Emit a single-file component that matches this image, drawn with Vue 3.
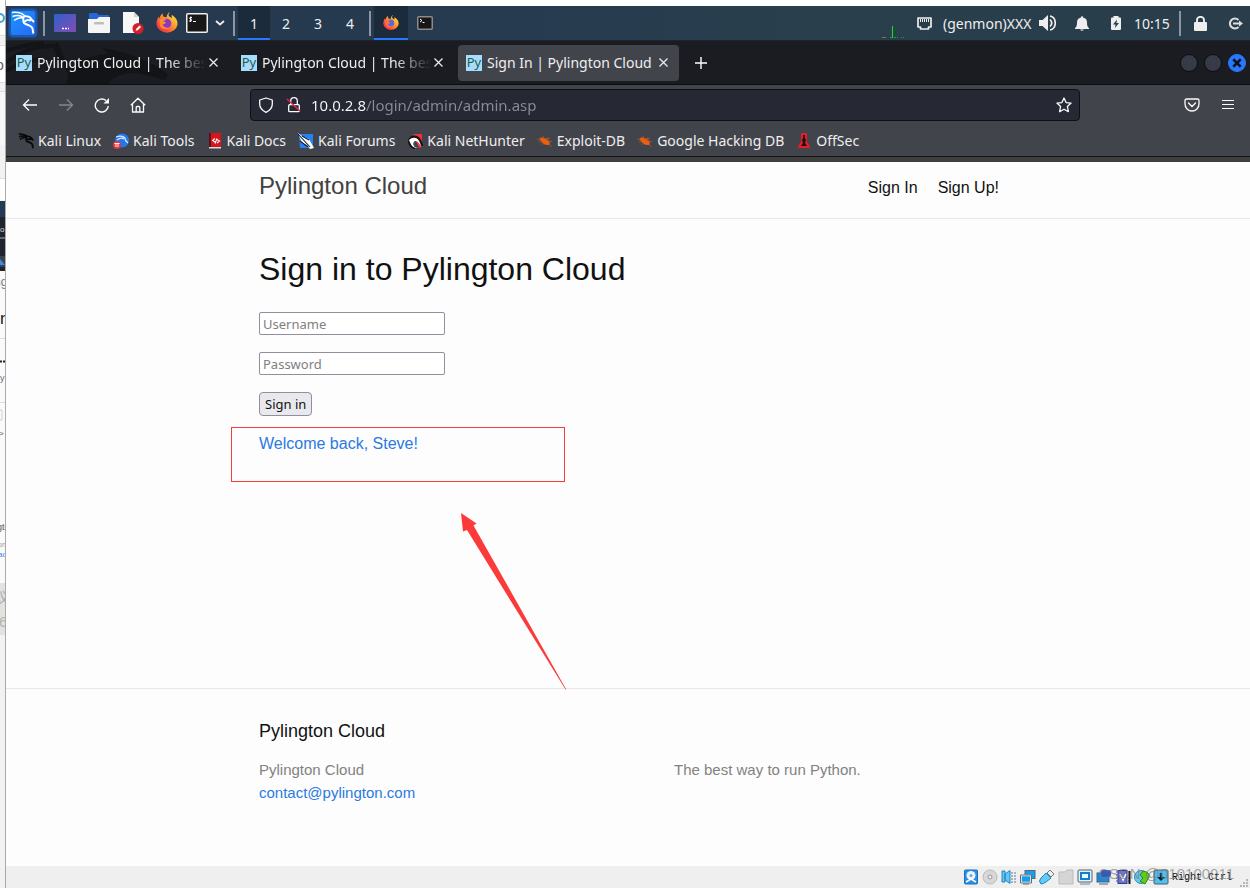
<script setup>
import { ref } from 'vue'

const username = ref('')
const password = ref('')
const url = ref('10.0.2.8/login/admin/admin.asp')

const dragon =
  'M1 1.5C6 1 11 2 14 5M1.500 5.500C6 4 10 4.500 13 6.500M3 9.500C6 7 9 6 12.500 7'
const dragonBody =
  'M12 5.500C13 8 11.500 10 13 12C15 14 19 13.500 21 16.500C22.300 18.500 21.500 20.500 22.500 22.500M12.500 5.500C16 4.500 19.500 6 20.500 8.500L23 11M20 9.500C16.500 8.500 14 9 14.500 11'

const tabs = [
  { title: 'Pylington Cloud | The best', active: false },
  { title: 'Pylington Cloud | The best', active: false },
  { title: 'Sign In | Pylington Cloud', active: true },
]
const workspaces = [1, 2, 3, 4]
const bookmarks = [
  { name: 'Kali Linux', icon: 'dragon' },
  { name: 'Kali Tools', icon: 'tools' },
  { name: 'Kali Docs', icon: 'docs' },
  { name: 'Kali Forums', icon: 'forums' },
  { name: 'Kali NetHunter', icon: 'hunter' },
  { name: 'Exploit-DB', icon: 'bug' },
  { name: 'Google Hacking DB', icon: 'bug' },
  { name: 'OffSec', icon: 'offsec' },
]
const devices = ['disk', 'optical', 'audio', 'network', 'usb', 'folder', 'display', 'record', 'cpu', 'mouse', 'host']
</script>

<template>
  <div class="desktop">
    <div class="behind" aria-hidden="true">
      <svg width="6" height="888">
        <rect width="6" height="888" fill="#f2f2f2" />
        <rect width="6" height="35" fill="#fff" />
        <rect y="46" width="6" height="36" fill="#fff" />
        <rect y="92" width="6" height="53" fill="#f7f7f7" />
        <rect y="178" width="6" height="22" fill="#fff" />
        <rect y="201" width="6" height="16" fill="#243b55" />
        <rect y="217" width="6" height="54" fill="#20242d" />
        <rect y="237" width="6" height="2" fill="#656973" />
        <rect y="256" width="6" height="11" fill="#3d4149" />
        <path d="M0 259l5 6h-5z" fill="#3988ed" />
        <rect y="271" width="6" height="312" fill="#fafafa" />
        <rect y="583" width="6" height="52" fill="#e2e2e2" />
        <path d="M0 35.500h6M0 45.500h6M0 82.500h6M0 91.500h6M0 178.500h6M0 338.500h6M0 402.500h6" stroke="#ddd" />
        <path d="M0 14a4 4 0 0 1 0 8" fill="none" stroke="#38a9df" stroke-width="2" />
        <text x="-4" y="70" font-size="14" fill="#6b5960">o</text>
        <text x="0" y="232" font-size="8" fill="#ddd">o</text>
        <text x="-6" y="286" font-size="12" fill="#777">ng</text>
        <text x="0" y="324" font-size="17" fill="#222">r</text>
        <path d="M0 361.500h5" stroke="#222" stroke-width="2" stroke-dasharray="2 1" />
        <text x="-3" y="381" font-size="9" fill="#656d81">ry</text>
        <path d="M0 410h2v10h-2" fill="none" stroke="#cfcfd4" />
        <text x="-1" y="436" font-size="8" fill="#555">&gt;</text>
        <text x="-3" y="530" font-size="9" fill="#555">gto</text>
        <text x="-2" y="547" font-size="7" fill="#999">on</text>
        <text x="-2" y="557" font-size="8" fill="#408be0">ad</text>
        <text x="-5" y="602" font-size="14" fill="#aaa">议</text>
        <text x="-1" y="627" font-size="15" fill="#bbb3a5">6</text>
      </svg>
    </div>

    <div class="screen">
      <header class="panel">
        <button class="cell kali" aria-label="Applications">
          <svg width="34" height="34" viewBox="0 0 34 34">
            <defs>
              <linearGradient id="kg" x2="1" y2="1"><stop stop-color="#1796fd" /><stop offset="1" stop-color="#2869f6" /></linearGradient>
            </defs>
            <rect x="2" y="2" width="30" height="30" rx="5" fill="#185cb8" opacity=".45" />
            <rect x="3" y="3" width="28" height="28" rx="4" fill="#1b62d2" opacity=".6" />
            <rect x="5" y="5" width="24" height="24" rx="2" fill="url(#kg)" />
            <g transform="translate(5 5)" fill="none" stroke="#fff">
              <path :d="dragon" stroke-width="1.500" /><path :d="dragonBody" stroke-width="2" />
            </g>
          </svg>
        </button>
        <i class="rule"></i>
        <button class="cell launcher" aria-label="Desktop">
          <svg width="22" height="18" viewBox="0 0 22 18">
            <defs><linearGradient id="dg" x2="1" y2="1"><stop stop-color="#2f61ca" /><stop offset="1" stop-color="#844bb4" /></linearGradient></defs>
            <rect width="22" height="18" rx="1" fill="url(#dg)" /><path d="M8 14.500h2m1 0h2m1 0h1" stroke="#fff" stroke-width="1.500" />
          </svg>
        </button>
        <button class="cell launcher" aria-label="Files">
          <svg width="22" height="20" viewBox="0 0 22 20">
            <path d="M1 1q0-1 1-1h7l2 2h9q1 0 1 1v5h-20z" fill="#2667d8" />
            <path d="M0 6h9l2-2h11v15q0 1-1 1h-20q-1 0-1-1z" fill="#f5f5f5" /><rect x="6" y="9" width="10" height="2.500" rx="1" fill="#bdbdbd" />
          </svg>
        </button>
        <button class="cell launcher" aria-label="Text editor">
          <svg width="22" height="22" viewBox="0 0 22 22">
            <path d="M1 0h11l5 5v16h-16z" fill="#f7f7f7" /><path d="M12 0v5h5" fill="#d2d2d2" />
            <circle cx="16" cy="16.500" r="5.500" fill="#d51e27" /><path d="M13.500 19l1-2.500 3-3 1.500 1.500-3 3z" fill="#fff" />
          </svg>
        </button>
        <button class="cell launcher" aria-label="Firefox">
          <svg width="22" height="22" viewBox="0 0 22 22">
            <defs><linearGradient id="fg" x1="1" x2="0" y2="1"><stop stop-color="#fff34c" /><stop offset=".4" stop-color="#ffa02c" /><stop offset=".75" stop-color="#f6433f" /><stop offset="1" stop-color="#e22771" /></linearGradient></defs>
            <path d="M14 0c-2 2-2 4 0 5l2 1c0-1-1-2 0-3 3 2 6 5 5.500 9.500a10.600 9.500 0 0 1-21 0c-.2-3 .5-6 2.500-8 0 1 0 1.500.5 2C4 4 5 2.500 7 1.500c-.5 1.500 0 2.500 1 3.500 1 0 2 .1 2.500.5C11 2.500 12 1 14 0z" fill="url(#fg)" />
            <circle cx="10.500" cy="11.500" r="4.800" fill="#8b39c5" /><path d="M3.500 8.500c2-2 5-2 7-.5-2 0-3 1-3 2 1 0 2 0 2.500.5-1 1.500-2.500 1.500-3.500 2 1 3 4.500 4 8 2.500-4 4-10 2-11-2z" fill="#ff8f25" />
          </svg>
        </button>
        <button class="cell terminal" aria-label="Terminal">
          <svg width="22" height="20" viewBox="0 0 22 20">
            <rect x=".75" y=".75" width="20.500" height="18.500" rx="1" fill="#181818" stroke="#eee" stroke-width="1.500" />
            <path d="M6 4.500H4q-1 1 0 1.500l1.500.7q.5 1-.5 1.300H3M4.700 3.500v5.500M7 8.500h3" fill="none" stroke="#fff" />
          </svg>
        </button>
        <button class="cell more" aria-label="More terminals">
          <svg width="10" height="6" viewBox="0 0 10 6"><path d="M1 1l4 3.500L9 1" fill="none" stroke="#eee" stroke-width="1.800" /></svg>
        </button>
        <i class="rule"></i>
        <nav class="spaces">
          <button v-for="n in workspaces" :key="n" class="space" :class="{ on: n === 1 }">{{ n }}</button>
        </nav>
        <i class="rule"></i>
        <button class="task on" aria-label="Firefox window">
          <svg width="16" height="16" viewBox="0 0 22 22">
            <path d="M14 0c-2 2-2 4 0 5l2 1c0-1-1-2 0-3 3 2 6 5 5.500 9.500a10.600 9.500 0 0 1-21 0c-.2-3 .5-6 2.500-8 0 1 0 1.500.5 2C4 4 5 2.500 7 1.500c-.5 1.500 0 2.500 1 3.500 1 0 2 .1 2.500.5C11 2.500 12 1 14 0z" fill="url(#fg)" />
            <circle cx="10.500" cy="11" r="4.800" fill="#5369df" /><path d="M3.500 8.500c2-2 5-2 7-.5-2 0-3 1-3 2 1 0 2 0 2.500.5-1 1.500-2.500 1.500-3.500 2 1 3 4.500 4 8 2.500-4 4-10 2-11-2z" fill="#ff7138" />
          </svg>
        </button>
        <button class="task" aria-label="Terminal window">
          <svg width="16" height="14" viewBox="0 0 16 14"><rect x=".75" y=".75" width="14.500" height="12.500" rx="1" fill="#171717" stroke="#8b8b8b" stroke-width="1.500" /><path d="M3 3l2 1.500-2 1.500M5.500 6.500h2" fill="none" stroke="#fff" /></svg>
        </button>

        <div class="tray">
          <svg class="graph" width="24" height="34" viewBox="0 0 24 34">
            <path d="M0 31.500h4" stroke="#8a7434" /><path d="M10.500 20v12" stroke="#0ee61d" /><path d="M8 31.500h2m2 0h2m1 0h1m3 0h1m1 0h1" stroke="#2c8f4b" />
          </svg>
          <svg class="net" width="15" height="13" viewBox="0 0 15 13">
            <path d="M1 1h13v9h-2.500v2h-8v-2H1z" fill="none" stroke="#eee" stroke-width="1.700" stroke-linejoin="round" /><path d="M3.500 2v3m2-3v3m2-3v3m2-3v3m2-3v3" stroke="#eee" />
          </svg>
          <span class="genmon">(genmon)XXX</span>
          <svg class="vol" width="17" height="16" viewBox="0 0 17 16">
            <path d="M0 5h3.500L9 0v16l-5.500-5H0z" fill="#eee" /><path d="M11 4.500q3.500 3.500 0 7M11 1c7 1.500 7 12.500 0 14" fill="none" stroke="#eee" stroke-width="1.700" />
          </svg>
          <svg class="bell" width="14" height="15" viewBox="0 0 14 15">
            <path d="M7 0q1 0 1 1.500c3 .5 4 2.500 4 5 0 3 .5 4.500 2 5.500v1H0v-1c1.500-1 2-2.500 2-5.500 0-2.500 1-4.500 4-5Q6 0 7 0zM5 13.500h4Q7 16 5 13.500z" fill="#eee" />
          </svg>
          <svg class="battery" width="10" height="14" viewBox="0 0 10 14">
            <path d="M2.500 0h5v1.500H9q1 0 1 1V13q0 1-1 1H1q-1 0-1-1V2.500q0-1 1-1h1.500z" fill="#eee" /><path d="M6 3.500L2 8.500h2.500L4 12l4-5H5.500z" fill="#29414f" />
          </svg>
          <time>10:15</time>
          <i class="rule"></i>
          <svg class="lock" width="13" height="15" viewBox="0 0 13 15"><path d="M1 6h11q1 0 1 1v7q0 1-1 1H1q-1 0-1-1V7q0-1 1-1z" fill="#eee" /><path d="M3 7V4a3.500 3.200 0 0 1 7 0v3" fill="none" stroke="#eee" stroke-width="1.900" /></svg>
          <svg class="exit" width="15" height="13" viewBox="0 0 15 13"><path d="M10.500 3a5 5 0 1 0 0 7" fill="none" stroke="#ddd" stroke-width="2.100" /><path d="M5 6.500h7" stroke="#ddd" stroke-width="2" /><path d="M11 3.500l4 3-4 3z" fill="#ddd" /></svg>
        </div>
      </header>

      <div class="tabbar">
        <svg class="shade" width="205" height="43" viewBox="0 0 205 43" aria-hidden="true">
          <path d="M0 22Q20 5 48 5Q52 14 58 22M0 10Q20 3 38 2M0 30q14-10 34-12M50 2q8 22 20 40" fill="none" stroke="#131418" stroke-width="4" />
          <path d="M60 43q4-28 42-30l-6-6q20 3 34 9 22 8 32 18l-3 5-22-6q-22-4-36 10z" fill="#131418" />
        </svg>
        <div v-for="(tab, i) in tabs" :key="i" class="tab" :class="{ active: tab.active }">
          <span class="py">Py</span>
          <span class="name">{{ tab.title }}</span>
          <button class="close" aria-label="Close tab"><svg width="9" height="9" viewBox="0 0 9 9"><path d="M.5.5l8 8m0-8l-8 8" stroke="#eee" stroke-width="1.200" /></svg></button>
        </div>
        <button class="newtab" aria-label="New tab"><svg width="12" height="12" viewBox="0 0 12 12"><path d="M6 0v12M0 6h12" stroke="#fff" stroke-width="1.400" /></svg></button>
        <div class="winbtns">
          <button aria-label="Minimise"></button>
          <button aria-label="Maximise"></button>
          <button class="x" aria-label="Close"><svg width="10" height="10" viewBox="0 0 8 8"><path d="M1 1l6 6m0-6l-6 6" stroke="#10131c" stroke-width="2" /></svg></button>
        </div>
      </div>

      <div class="toolbar">
        <button class="tool" aria-label="Back"><svg width="16" height="16" viewBox="0 0 16 16"><path d="M7 2.500L1.500 8 7 13.500M1.500 8H15" fill="none" stroke="#fbfbfe" stroke-width="1.300" /></svg></button>
        <button class="tool" aria-label="Forward"><svg width="16" height="16" viewBox="0 0 16 16"><path d="M9 2.500l5.500 5.500L9 13.500M14.500 8H1" fill="none" stroke="#85878e" stroke-width="1.300" /></svg></button>
        <button class="tool" aria-label="Reload"><svg width="16" height="16" viewBox="0 0 16 16"><path d="M14.300 9A6.500 6.500 0 1 1 12 3.500" fill="none" stroke="#fbfbfe" stroke-width="1.400" /><path d="M15 1v5.500H9.500z" fill="#fbfbfe" /></svg></button>
        <button class="tool" aria-label="Home"><svg width="16" height="16" viewBox="0 0 16 16"><path d="M.8 8.200L8 1.200l7.200 7M2.500 7v8h11V7M6.200 15v-4.500q0-1 1-1h1.600q1 0 1 1V15" fill="none" stroke="#fbfbfe" stroke-width="1.300" stroke-linejoin="round" /></svg></button>
        <div class="urlbar">
          <svg width="16" height="16" viewBox="0 0 16 16"><path d="M8 1l6.300 2v4c0 4-2.500 6.500-6.300 8.300C4.200 13.500 1.700 11 1.700 7V3z" fill="none" stroke="#fbfbfe" stroke-width="1.300" stroke-linejoin="round" /></svg>
          <svg class="insecure" width="16" height="16" viewBox="0 0 16 16"><rect x="2.700" y="7.700" width="10.600" height="7" rx="1" fill="none" stroke="#fbfbfe" stroke-width="1.300" /><path d="M4.700 7V4a3.300 3.300 0 0 1 6.600 0v3" fill="none" stroke="#fbfbfe" stroke-width="1.300" /><path d="M1 2l13 12" stroke="#e22850" stroke-width="1.500" /></svg>
          <input v-model="url" class="address" aria-label="Address" />
          <button class="star" aria-label="Bookmark this page"><svg width="16" height="16" viewBox="0 0 16 16"><path d="M8 1l2.100 4.600 5 .5-3.700 3.400 1 5.200L8 12.200l-4.400 2.500 1-5.200L.9 6.100l5-.5z" fill="none" stroke="#fbfbfe" stroke-width="1.300" stroke-linejoin="round" /></svg></button>
        </div>
        <button class="tool" aria-label="Save to Pocket"><svg width="16" height="16" viewBox="0 0 16 16"><path d="M2.500 2h11q1.500 0 1.500 1.500V7a7 7 0 0 1-14 0V3.500Q1 2 2.500 2zM4.500 6L8 9.500 11.500 6" fill="none" stroke="#fbfbfe" stroke-width="1.300" stroke-linecap="round" /></svg></button>
        <button class="tool" aria-label="Menu"><svg width="14" height="12" viewBox="0 0 14 12"><path d="M1 1.500h12M1 5.500h12M1 9.500h12" stroke="#fbfbfe" stroke-width="1.200" /></svg></button>
      </div>

      <nav class="bookmarks">
        <a v-for="b in bookmarks" :key="b.name" href="#">
          <svg width="16" height="16" viewBox="0 0 16 16">
            <g v-if="b.icon === 'dragon'" transform="scale(.67)" fill="none" stroke="#08090b"><path :d="dragon" stroke-width="2.200" /><path :d="dragonBody" stroke-width="2.800" /></g>
            <template v-else-if="b.icon === 'tools'"><circle cx="9" cy="7.500" r="7" fill="#2378ef" /><path d="M3 4q6-2 9 1 0 3 3 5M4 7q4-3 7-1" fill="none" stroke="#d9e9ff" stroke-width="1.200" /><circle cx="4" cy="12" r="4" fill="#e8333e" /><path d="M1.500 10.500h5M3 10.500v3.500m2-3.500v3.500" stroke="#fff" /></template>
            <template v-else-if="b.icon === 'docs'"><path d="M2 0h12v15H2z" fill="#d9141c" /><path d="M2 0h2v15H2z" fill="#5e1015" /><path d="M2 14h12v1.500H2z" fill="#ddd" /><path d="M8 5.500L5.500 7.500 8 9M10 6.500l2.500 1.500-2.500 2M10 5.500l-2 5" fill="none" stroke="#fff" stroke-width="1.100" /></template>
            <template v-else-if="b.icon === 'forums'"><path d="M1 1h14v14H2z" fill="#2482f4" /><path d="M0 0l4 3 7 3 5 9-4 1-3-4-5-2z" fill="#fff" /><path d="M0 1l12 13M4 3l7 4M2 8l8 6" stroke="#171d28" stroke-width="1.100" fill="none" /></template>
            <template v-else-if="b.icon === 'hunter'"><path d="M6 1h9v13l-3 1z" fill="#f2303a" /><path d="M2 8q2-5 7-4 4 1 6 9M2 8q1 6 6 7" fill="none" stroke="#161616" stroke-width="2.600" /><path d="M2 7q3-3 7-2 4 2 5 9-3-7-6-6-3 2-1 5 1 2 4 1-3 2-6-1-2-3-3-6z" fill="#fff" /></template>
            <template v-else-if="b.icon === 'bug'"><path d="M2.500 5q4-1.500 7 1 3 1 3.500 4l-1 2q-5 .5-8-3.500z" fill="#ed5f12" /><path d="M0 6l5 2-3 1.500M6 3l1 3 6-.5M11 4l-1 4 5 .5M5 12l2-3M12 10l2 4" fill="none" stroke="#a8572a" stroke-width=".8" /></template>
            <template v-else><path d="M5 0h6v9q3 3 3 6H2q0-3 3-6z" fill="#e02026" /><path d="M7 2h2v3l1 2-1 3 2 3H5l2-3-1-3 1-2z" fill="#280d10" /></template>
          </svg>{{ b.name }}</a>
      </nav>

      <div class="page">
        <header class="site-header">
          <div class="wrapper head">
            <a class="site-title" href="#">Pylington Cloud</a>
            <nav class="links"><a href="#">Sign In</a><a href="#">Sign Up!</a></nav>
          </div>
        </header>
        <main class="wrapper content">
          <h1>Sign in to Pylington Cloud</h1>
          <form @submit.prevent>
            <input v-model="username" placeholder="Username" aria-label="Username" />
            <input v-model="password" type="password" placeholder="Password" aria-label="Password" />
            <button type="submit">Sign in</button>
          </form>
          <p class="welcome">
            Welcome back, Steve!
            <span class="mark"></span>
            <svg class="arrow" width="106" height="177" viewBox="0 0 106 177" aria-hidden="true"><path d="M0 0L15.500 10.500 12.500 12.500 105.500 177 104.500 176.500 6 17 2 18.500z" fill="#fb3a3a" /></svg>
          </p>
        </main>
        <footer class="site-footer">
          <div class="wrapper">
            <h2>Pylington Cloud</h2>
            <div class="cols">
              <ul><li>Pylington Cloud</li><li><a href="#">contact@pylington.com</a></li></ul>
              <p>The best way to run Python.</p>
            </div>
          </div>
        </footer>
      </div>

      <footer class="status">
        <svg v-for="d in devices" :key="d" width="16" height="16" viewBox="0 0 16 16">
          <template v-if="d === 'disk'"><rect x="1.500" y="1" width="13" height="14" rx="1" fill="#2c8ee4" stroke="#1872b8" /><circle cx="8" cy="6.500" r="4.500" fill="#eaf6ff" /><circle cx="8" cy="6.500" r="1.500" fill="#6aa8d8" /><path d="M3 13l5-3 5 3" fill="none" stroke="#fff" stroke-width="1.500" /></template>
          <template v-else-if="d === 'optical'"><circle cx="8" cy="8" r="7" fill="#d8d8d8" stroke="#b9b9b9" /><circle cx="8" cy="8" r="2" fill="#eee" stroke="#999" /></template>
          <template v-else-if="d === 'audio'"><path d="M1 2h3v11H1zM4 5l5-3.500v13l-5-3.500z" fill="#65c7f7" stroke="#2386bf" /><path d="M11 3v11M14 3v11" stroke="#a6b5bd" stroke-width="2" stroke-dasharray="2 1" /></template>
          <template v-else-if="d === 'network'"><rect x="5" y="1.500" width="10" height="8" fill="#169eed" stroke="#5c666e" /><rect x="1" y="6.500" width="10" height="7" fill="#169eed" stroke="#fff" stroke-width="1.500" /><path d="M.5 6h11v8H.5zM3 15h6" fill="none" stroke="#616a70" /></template>
          <template v-else-if="d === 'usb'"><path d="M2 15q-3-3 0-6l5-5 5 5-5 4q-3 2-5 2z" fill="#65c9fa" stroke="#1b87bd" /><path d="M8 4l3-3 4 4-3 3z" fill="#eee" stroke="#777" /></template>
          <path v-else-if="d === 'folder'" d="M1 3h6l2-2h6v14H1z" fill="#d5d5d5" stroke="#bbb" />
          <template v-else-if="d === 'display'"><rect x="1" y="1" width="14" height="12" rx="1" fill="#dff2ff" stroke="#555f68" /><rect x="4" y="4" width="8" height="6" fill="#dff" stroke="#177bd2" stroke-width="2" /><path d="M3 15h10" stroke="#77838b" /></template>
          <template v-else-if="d === 'record'"><rect x="1" y="4" width="12" height="9" fill="#188ce3" stroke="#40647f" /><rect x="5" y="1" width="10" height="7" rx="2" fill="#385ab5" /><path d="M3 15h9" stroke="#56636c" /></template>
          <template v-else-if="d === 'cpu'"><rect x="3" y="1.500" width="9" height="13" fill="#6b74c7" stroke="#343b91" /><path d="M1 3h14M1 6h14M1 9h14M1 12h14" stroke="#4b58ac" stroke-dasharray="2 10" /><path d="M5 5l3 6 3-6" fill="none" stroke="#fff" stroke-width="1.500" /><path d="M14.500 2v13" stroke="#111" stroke-width="2" /></template>
          <template v-else-if="d === 'mouse'"><circle cx="7" cy="8" r="6.500" fill="#65c7f4" stroke="#2c8db7" /><path d="M9 2q7 1 6 6l-4 7-5-3 3-3-3-3z" fill="#5bce1a" stroke="#36860c" /></template>
          <template v-else><rect x="1" y="1" width="14" height="14" rx="1" fill="#4fc0f2" stroke="#4e5d67" /><path d="M8 4v6" stroke="#10252f" stroke-width="2.500" /><path d="M4 8h8l-4 4z" fill="#10252f" /></template>
        </svg>
        <span class="hostkey">Right Ctrl<span class="watermark">CSDN @010100011</span></span>
        <svg class="grip" width="9" height="9" viewBox="0 0 9 9"><path d="M6 1h2M3 4h2m1 0h2M0 7h2m1 0h2m1 0h2" stroke="#b5b5b5" stroke-width="2" /></svg>
      </footer>
    </div>
  </div>
</template>

<style>
body { margin: 0; background: #fff; }
</style>

<style scoped>
* { box-sizing: border-box; }
button { font: inherit; color: inherit; border: 0; padding: 0; background: none; }
a { color: inherit; text-decoration: none; }
svg { display: block; flex: none; }
h1, h2, p, ul { margin: 0; padding: 0; font-weight: 400; list-style: none; }
.desktop { display: flex; min-height: 100vh; font-family: "Noto Sans", sans-serif; overflow: hidden; }
.behind { width: 6px; flex: none; border-right: 1px solid #aaa; font-family: "Liberation Sans", "Noto Sans CJK SC", sans-serif; overflow: hidden; }
.screen { flex: 1; min-width: 0; display: flex; flex-direction: column; padding-top: 6px; }

.panel { display: flex; align-items: center; height: 35px; background: linear-gradient(90deg, #26384e, #263b50 40%, #293f4c 65%, #293d4b); border-bottom: 1px solid #1c242e; color: #eee; font-size: 14px; }
.cell { display: flex; align-items: center; justify-content: center; }
.kali { width: 34px; margin-right: 3px; }
.rule { width: 2px; height: 25px; background: #8b96a2; flex: none; }
.launcher { width: 34px; }
.terminal { width: 26px; }
.rule + .launcher { margin-left: 3px; }
.more { width: 20px; margin-right: 3px; }
.spaces { display: flex; align-self: stretch; margin: 0 3px; }
.space { width: 32px; height: 34px; font-size: 14px; }
.on { background: #1c2b3b; box-shadow: inset 0 -2px #2777ff; }
.task { display: flex; align-items: center; justify-content: center; width: 34px; height: 34px; }
.rule + .task { margin-left: 3px; }
.tray { display: flex; align-items: center; margin-left: auto; padding-right: 7px; white-space: nowrap; }
.genmon { width: 88px; }
.tray time { width: 33px; }
.net { margin: 0 11px; }
.vol { margin: 0 19px 0 8px; }
.bell { margin-right: 22px; }
.battery { margin-right: 13px; }
.tray .rule { margin: 0 13px 0 12px; }
.lock { margin-right: 21px; }

.tabbar { position: relative; display: flex; align-items: center; gap: 4px; height: 44px; padding-left: 2px; background: #1b1c21; border-bottom: 1px solid #0c0d11; color: #eee; font-size: 14px; }
.shade { position: absolute; left: 0; top: 0; }
.tab { position: relative; display: flex; align-items: center; width: 221px; height: 36px; padding: 0 11px 0 8px; border-radius: 4px; }
.tab.active { background: #42444c; }
.py { width: 16px; height: 16px; margin-right: 5px; overflow: hidden; background: #a8dcff; color: #1f5c4c; font-size: 13px; line-height: 14px; text-align: center; }
.name { flex: 1; min-width: 0; overflow: hidden; white-space: nowrap; -webkit-mask-image: linear-gradient(90deg, #000 78%, transparent 100%); mask-image: linear-gradient(90deg, #000 78%, transparent 100%); }
.active .name { -webkit-mask-image: none; mask-image: none; }
.close { margin-left: 3px; }
.newtab { margin-left: 12px; }
.winbtns { display: flex; align-items: center; gap: 6px; margin-left: auto; padding-right: 4px; }
.winbtns button { display: flex; align-items: center; justify-content: center; width: 18px; height: 18px; border-radius: 50%; border: 1px solid #0c0d11; background: #373b48; }
.winbtns .x { background: #2777ff; border-color: #2777ff; }

.toolbar { display: flex; align-items: center; height: 40px; padding: 0 4px 0 6px; background: #42444c; }
.tool { display: flex; align-items: center; justify-content: center; width: 36px; height: 36px; }
.urlbar { display: flex; align-items: center; flex: 1; gap: 12px; height: 32px; margin: 0 94px; padding: 0 7px; background: #262833; border: 1px solid #0f1015; border-radius: 4px; }
.insecure { margin-right: -3px; }
.address { flex: 1; min-width: 0; padding: 0; border: 0; outline: 0; background: linear-gradient(90deg, #fbfbfe 55px, #8b8c94 55px); -webkit-background-clip: text; background-clip: text; color: transparent; font: 15px "Noto Sans", sans-serif; }
.bookmarks { display: flex; align-items: center; gap: 12px; height: 37px; padding: 0 12px 6px; background: linear-gradient(#42444c 31px, #111216 31px, #111216 32px, #403f3f 32px); color: #eee; font-size: 14px; }
.bookmarks a { display: flex; align-items: center; gap: 4px; white-space: nowrap; }

.page { flex: 1; display: flex; flex-direction: column; background: #fdfdfd; color: #111; font: 16px/24px "Liberation Sans", Arial, sans-serif; }
.wrapper { width: 100%; max-width: 800px; margin: 0 auto; padding: 0 29px 0 31px; }
.site-header { border-bottom: 1px solid #e8e8e8; }
.head { display: flex; align-items: center; justify-content: space-between; height: 56px; }
.site-title { color: #424242; font-size: 24px; line-height: 48px; padding-bottom: 8px; }
.links { display: flex; gap: 20px; padding-bottom: 4px; }
.content { flex: 1; padding-top: 26px; }
h1 { font-size: 32px; line-height: 48px; }
form { display: flex; flex-direction: column; align-items: flex-start; gap: 17px; padding-top: 19px; }
form input { width: 186px; height: 23px; padding: 0 3px; border: 1px solid #8f8f9d; border-radius: 2px; background: #fff; font: 13px "Noto Sans", sans-serif; }
form input::placeholder { color: #808080; opacity: 1; }
form button { height: 24px; padding: 0 5px; border: 1px solid #8f8f9d; border-radius: 4px; background: #e9e9ed; font: 13px "Noto Sans", sans-serif; }
.welcome { position: relative; margin-top: 16px; color: #2a7ae2; }
.mark { position: absolute; left: -28px; top: -5px; width: 334px; height: 55px; border: 1px solid #fb3a3a; }
.arrow { position: absolute; left: 202px; top: 81px; }
.site-footer { min-height: 178px; padding-top: 30px; border-top: 1px solid #e8e8e8; }
h2 { font-size: 18px; line-height: 24px; margin-bottom: 15px; }
.cols { display: grid; grid-template-columns: 415px 1fr; color: #828282; font-size: 15px; line-height: 23px; }
.cols a { color: #2a7ae2; }

.status { display: flex; align-items: center; justify-content: flex-end; gap: 3px; height: 22px; padding-right: 1px; background: #efefef; }
.hostkey { position: relative; margin-right: 5px; color: #111; font: 10px "Liberation Mono", monospace; white-space: nowrap; }
.watermark { position: absolute; right: -2px; top: -7px; color: rgba(120, 120, 120, .65); font: 15px "Liberation Sans", Arial, sans-serif; }
.grip { align-self: flex-end; }
</style>
